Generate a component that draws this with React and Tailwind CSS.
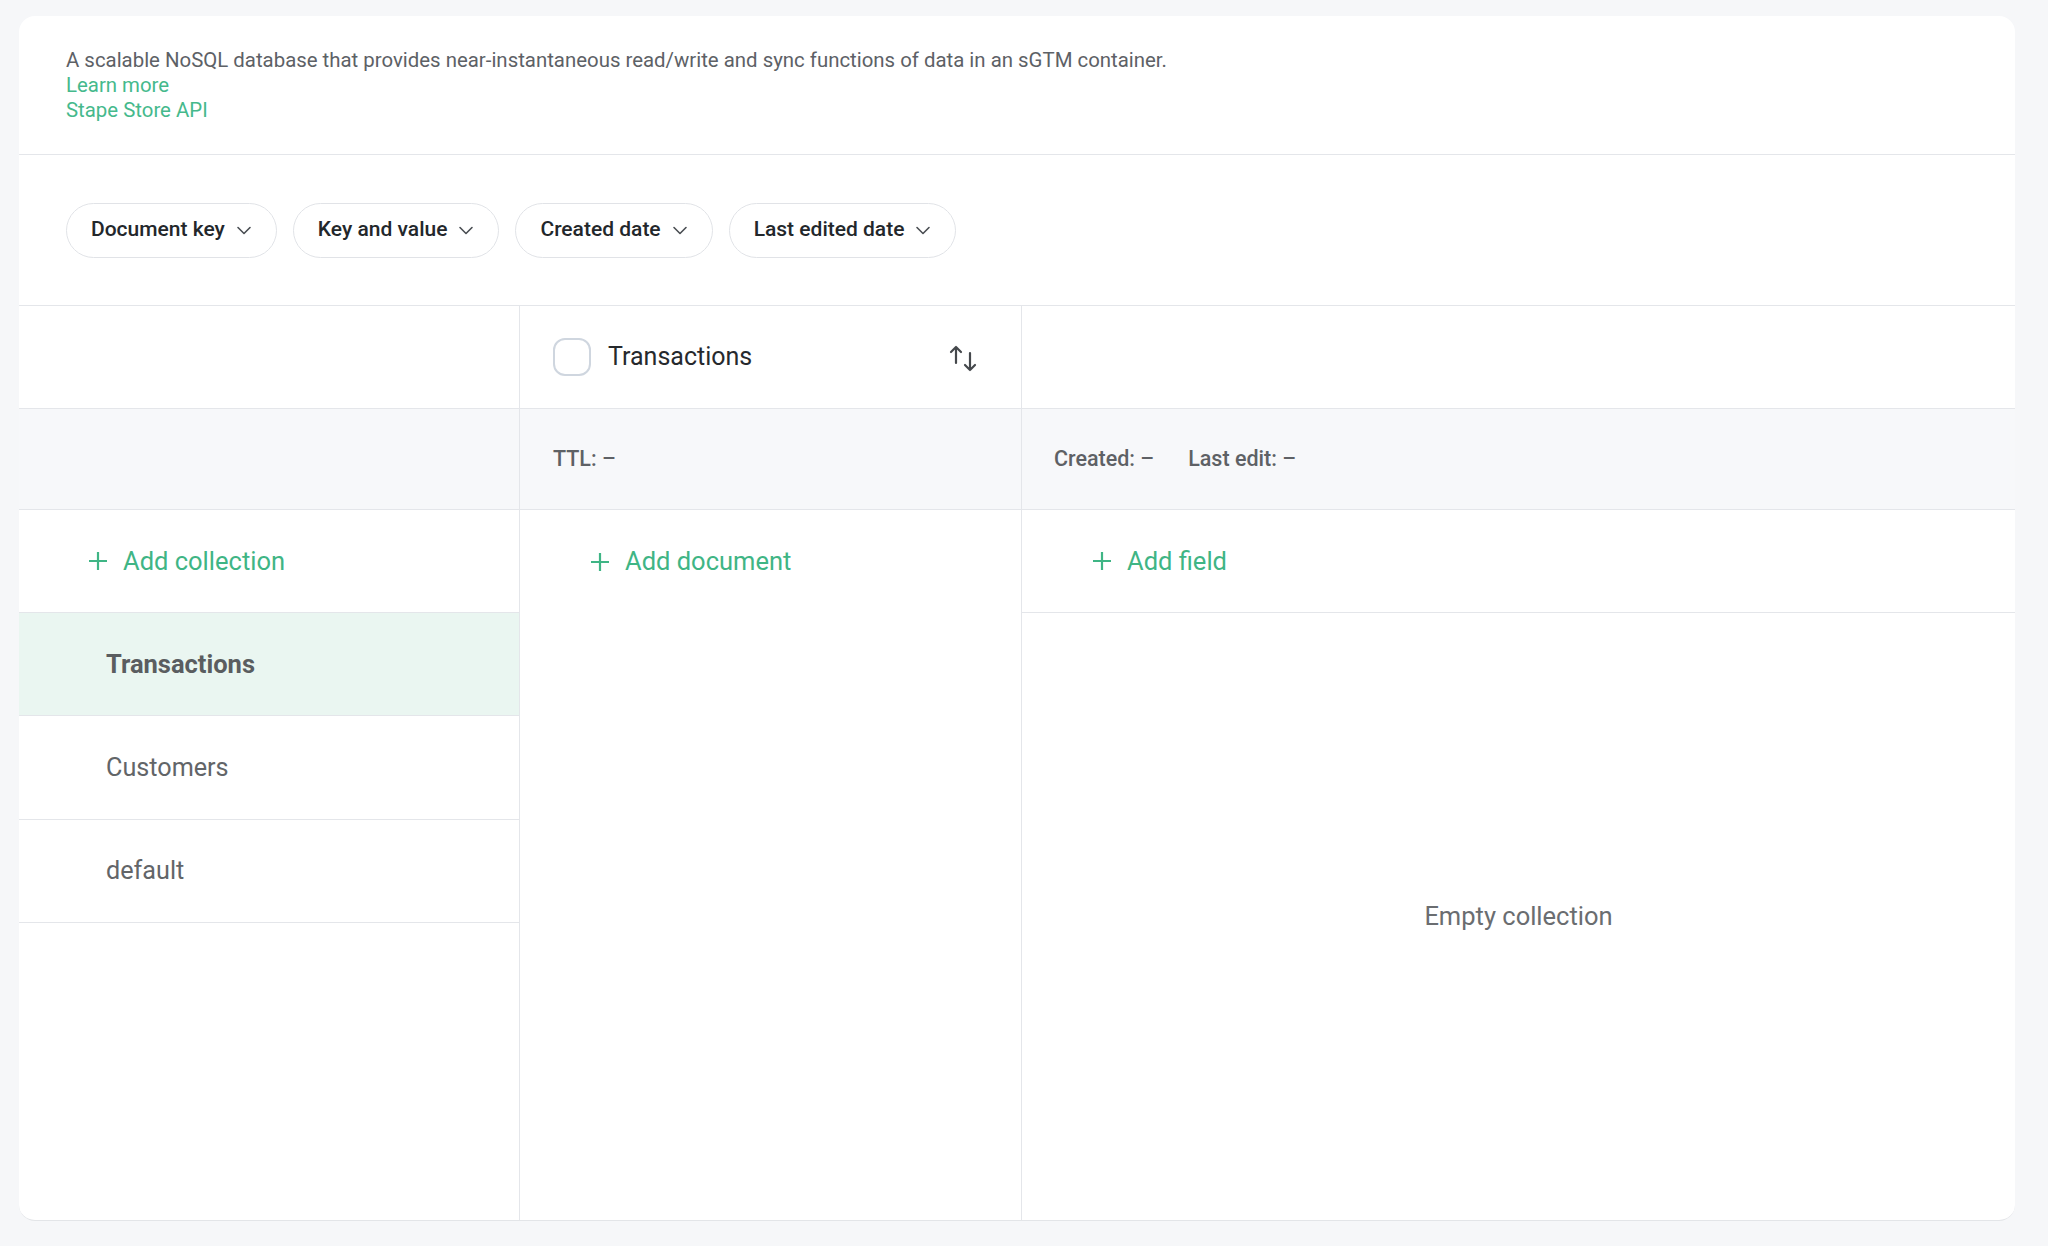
import React from "react";

const FONT = { fontFamily: "Roboto, 'Noto Sans', sans-serif" };

function Chevron() {
  return (
    <svg width="16" height="16" viewBox="0 0 16 16" fill="none" stroke="#4a4e53" strokeWidth="1.6" strokeLinecap="round" strokeLinejoin="round">
      <path d="M2 5.5 8 11.5 14 5.5" />
    </svg>
  );
}

function Plus() {
  return (
    <svg width="20" height="20" viewBox="0 0 20 20" fill="none" stroke="#3fb585" strokeWidth="2.2" strokeLinecap="butt">
      <path d="M10 1v18M1 10h18" />
    </svg>
  );
}

function SortIcon() {
  return (
    <svg width="28" height="28" viewBox="0 0 28 28" fill="none" stroke="#45484c" strokeWidth="2.2" strokeLinecap="round" strokeLinejoin="round">
      <path d="M7 19V3M2 8l5-5 5 5" />
      <path d="M21 9v17M16 21l5 5 5-5" />
    </svg>
  );
}

function Chip({ label }) {
  return (
    <button className="h-[55px] rounded-full border border-[#e1e3e7] bg-white pl-[24px] pr-[24px] flex items-center gap-[11px] text-[21px] font-medium text-[#23272b]">
      <span>{label}</span>
      <Chevron />
    </button>
  );
}

export default function App() {
  return (
    <div className="min-h-screen bg-[#f6f7f9] pt-4 pl-[19px] pr-[33px] pb-[25px]" style={FONT}>
      <div className="h-[1205px] w-[1996px] bg-white rounded-2xl border-b border-[#e3e5e8] flex flex-col overflow-hidden">
        <div className="px-[47px] pt-[32px] pb-[31px] border-b border-[#e4e6ea] text-[20.4px] leading-[25px]">
          <p className="text-[#5d6166]">A scalable NoSQL database that provides near-instantaneous read/write and sync functions of data in an sGTM container.</p>
          <div><a className="text-[#45b98c]">Learn more</a></div>
          <div><a className="text-[#45b98c]">Stape Store API</a></div>
        </div>
        <div className="h-[151px] border-b border-[#e4e6ea] flex items-center gap-4 px-[47px]">
          <Chip label="Document key" />
          <Chip label="Key and value" />
          <Chip label="Created date" />
          <Chip label="Last edited date" />
        </div>
        <div className="flex-1 grid grid-cols-[501px_502px_1fr]">
          {/* Column 1 */}
          <div className="flex flex-col border-r border-[#e4e6ea]">
            <div className="h-[103px] border-b border-[#e4e6ea]" />
            <div className="h-[101px] border-b border-[#e4e6ea] bg-[#f7f8fa]" />
            <div className="h-[103px] border-b border-[#e4e6ea] flex items-center pl-[69px] gap-[15px] text-[25.5px] text-[#3fb585]">
              <Plus />
              <span>Add collection</span>
            </div>
            <div className="h-[103px] border-b border-[#e4e6ea] bg-[#eaf6f1] flex items-center pl-[87px] text-[25.5px] font-bold text-[#5a5d60]">
              <span>Transactions</span>
            </div>
            <div className="h-[104px] border-b border-[#e4e6ea] flex items-center pl-[87px] text-[25.2px] text-[#626568]">
              <span>Customers</span>
            </div>
            <div className="h-[103px] border-b border-[#e4e6ea] flex items-center pl-[87px] text-[25.2px] text-[#626568]">
              default
            </div>
          </div>
          {/* Column 2 */}
          <div className="flex flex-col border-r border-[#e4e6ea]">
            <div className="h-[103px] border-b border-[#e4e6ea] flex items-center pl-[33px] pr-[44px]">
              <span className="w-[38px] h-[38px] rounded-[12px] border-2 border-[#cfd6df] bg-white" />
              <span className="ml-[17px] text-[25px] text-[#26292d]">Transactions</span>
              <span className="ml-auto mt-[1px]"><SortIcon /></span>
            </div>
            <div className="h-[101px] border-b border-[#e4e6ea] bg-[#f7f8fa] flex items-center pl-[33px] text-[21.5px] font-medium text-[#5e6165]">
              <span>TTL: –</span>
            </div>
            <div className="h-[103px] flex items-center pl-[70px] gap-[15px] text-[25.5px] text-[#3fb585]">
              <Plus />
              <span>Add document</span>
            </div>
          </div>
          {/* Column 3 */}
          <div className="flex flex-col">
            <div className="h-[103px] border-b border-[#e4e6ea]" />
            <div className="h-[101px] border-b border-[#e4e6ea] bg-[#f7f8fa] flex items-center pl-[32px] gap-[34px] text-[21.5px] font-medium text-[#5e6165]">
              <span>Created: –</span>
              <span>Last edit: –</span>
            </div>
            <div className="h-[103px] border-b border-[#e4e6ea] flex items-center pl-[70px] gap-[15px] text-[25.5px] text-[#3fb585]">
              <Plus />
              <span>Add field</span>
            </div>
            <div className="flex-1 flex items-center justify-center text-[25.5px] text-[#6a6d70]">
              <span>Empty collection</span>
            </div>
          </div>
        </div>
      </div>
    </div>
  );
}
